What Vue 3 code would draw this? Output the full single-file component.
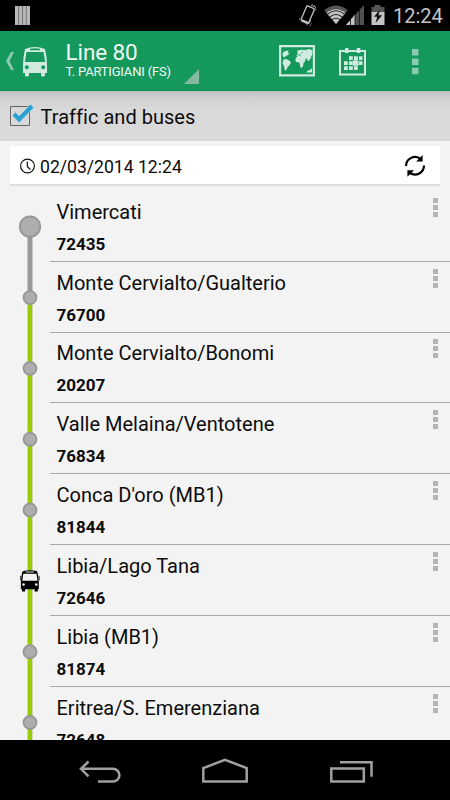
<script setup>
import { ref } from 'vue'

const traffic = ref(true)

const stops = [
  { name: 'Vimercati', code: '72435' },
  { name: 'Monte Cervialto/Gualterio', code: '76700' },
  { name: 'Monte Cervialto/Bonomi', code: '20207' },
  { name: 'Valle Melaina/Ventotene', code: '76834' },
  { name: "Conca D'oro (MB1)", code: '81844' },
  { name: 'Libia/Lago Tana', code: '72646', bus: true },
  { name: 'Libia (MB1)', code: '81874' },
  { name: 'Eritrea/S. Emerenziana', code: '72648' },
]

// height of one stop row, shared by the list and the rail
const pitch = 70.83
const nodeY = (i) => 35.7 + i * pitch
</script>

<template>
  <div class="screen">
    <header class="status">
      <svg class="bars" width="16" height="20" viewBox="0 0 16 20">
        <path d="M0 0h15v19H0z" fill="#b8b8b8" />
        <path d="M3.7 0v19M7.5 0v19M11.3 0v19" stroke="#555" stroke-width=".7" />
      </svg>
      <svg class="tray" width="90" height="31" viewBox="0 0 90 31">
        <g fill="none" stroke="#c4c4c4">
          <path d="M7.700 6.300q.3-.7 1-.4l6.200 2.800q.7.400.4 1.100l-5.600 13q-.4.700-1 .4l-6.200-2.800q-.7-.4-.4-1.100z" stroke-width="1.300" />
          <path d="M2.700 20.300l6.200 2.800" stroke-width="2.400" />
          <path d="M12 5.200l4.500 2.100.3 3M13 4.700l3.700 1.700M0 18v2.500M7.500 24.800l3.500-2 .8-3M11 25.800l1.500-2.500" stroke-width=".9" stroke-dasharray="1.500 .8" />
        </g>
        <path d="M25.200 10.200Q37 1 48.800 10.200L37 24z" fill="#555" />
        <path d="M27.600 13Q37 5.500 46.400 13L37 24z" fill="#c4c4c4" />
        <g fill="none" stroke="#222" stroke-width="1.100">
          <path d="M28.500 14.200q8.500-7 17 0M30.800 17q6.200-5 12.400 0M33.200 19.800q3.800-3 7.600 0" />
        </g>
        <path d="M47 25L65 5v20z" fill="#505050" />
        <path d="M47 25l9-10.600V25z" fill="#c4c4c4" />
        <path d="M51.500 18v7M56 14v11M60.500 9v16" stroke="#111" stroke-width=".8" />
        <path d="M75.500 5h6v2h4v6h-13V7h3z" fill="#555" />
        <path d="M72.500 12h13v13h-13z" fill="#c4c4c4" />
        <path d="M81 9.500l-6 7.200h3.300L76.500 23l6.700-7.700h-3.700z" fill="#111" />
      </svg>
      <span class="time">12:24</span>
    </header>

    <nav class="actionbar">
      <svg class="up" width="10" height="20" viewBox="0 0 10 20">
        <path d="M6 1h3L4.500 10 9 19H6L1 10z" fill="#8acbaf" />
      </svg>
      <svg class="bus" width="26" height="31" viewBox="0 0 26 31">
        <path fill="#d0eadf" fill-rule="evenodd" d="M3 3Q13-1 23 3l1.500 8 .5 8v8h-2v2q0 1.500-1.500 1.500h-1Q19 30.500 19 29v-2H7v2q0 1.500-1.500 1.500h-1Q3 30.500 3 29v-2H1v-8l.5-8zM8 2.800v1.400h10V2.800Q13 1.600 8 2.800zM4.500 6L2.900 16h20.200L21.500 6zM4.800 19.200a2 2 0 1 0 0 4 2 2 0 0 0 0-4zm16.400 0a2 2 0 1 0 0 4 2 2 0 0 0 0-4z" />
      </svg>
      <div class="title">
        <div class="line">Line 80</div>
        <div class="dest">T. PARTIGIANI (FS)</div>
      </div>
      <svg class="corner" width="15" height="15" viewBox="0 0 15 15">
        <path d="M15 0v15H0z" fill="#84b99f" />
      </svg>
      <svg class="map" width="37" height="32" viewBox="0 0 37 32">
        <path d="M1.100 1.100h33.800v29.200H1.100z" fill="none" stroke="#d0eadf" stroke-width="2.200" />
        <g fill="#d0eadf">
          <path d="M4 7.500l2-1.500 3.500-.5-.5 2.500 1.500.5-1.500 1.500-2 1-1.500 1.500-1.500-1-.5-2zM4.500 14.500l3-.5 2.200 1.200 2.300 2-1.500 3-2 2-1.500 3.500-1.300-1-.7-4-1.500-2.500z" />
          <path d="M18.500 5.500l4-.7 4 .3 4-1 3 1.500-.3 4.400-1.200 1.500.5 2-1.500-.2-.5 2.200-1.500.5-1.300-2.500-1.200.3-.5 2.700-1.500 1.500-.3 3-1.700 2-1.200-1-.8-4.500-3.200-.5-1-1.500.5-2.500 1.500-1.500-.8-1.500 1-1z" />
          <path d="M33 23v4.500h-6l2-2 2-.5z" />
        </g>
        <path d="M18.500 9.800l3.500.5m1.500-3.500l-1 1.500" stroke="#14985c" stroke-width=".8" />
      </svg>
      <svg class="calendar" width="28" height="28" viewBox="0 0 28 28">
        <path d="M1 3h25v23.500H1z" fill="none" stroke="#d0eadf" stroke-width="2" />
        <path fill="#d0eadf" d="M6 0h3.500v5H6zM17.800 0h3.500v5h-3.500zM10 8.200h3.800v3.800H10zM15 8.200h3.800v3.800H15zM20 8.200h3.500v3.800H20zM5 13.200h3.800V17H5zM10 13.200h3.800V17H10zM20 13.200h3.500V17H20zM5 18.200h3.800V22H5zM10 18.200h3.800V22H10zM15 18.200h3.800V22H15zM14 12.300h5.500v5.500H14z" />
      </svg>
      <svg class="overflow" width="7" height="26" viewBox="0 0 7 26">
        <path d="M0 0h6.500v6.500H0zM0 9.400h6.500v6.500H0zM0 18.800h6.500v6.500H0z" fill="#8acbaf" />
      </svg>
    </nav>

    <div class="toggle" @click="traffic = !traffic">
      <svg width="26" height="26" viewBox="0 0 26 26">
        <path d="M1.500 5.500h19v19h-19z" fill="none" stroke="#666" stroke-width="1" />
        <g v-if="traffic" fill="none">
          <path d="M5 13.500l5.500 5L23 5" stroke="#b4d8e8" stroke-width="6" opacity=".6" />
          <path d="M5 13l5.200 5.200L23 5" stroke="#2a9fd0" stroke-width="4.200" />
        </g>
      </svg>
      <span>Traffic and buses</span>
    </div>

    <div class="update">
      <svg width="16" height="16" viewBox="0 0 16 16" fill="none" stroke="#111">
        <circle cx="7.500" cy="8" r="6.900" stroke-width="1.200" />
        <path d="M7.300 3.500v5l3 3" stroke-width="1.200" />
      </svg>
      <span>02/03/2014 12:24</span>
      <svg class="refresh" width="22" height="24" viewBox="0 0 22 24">
        <path d="M2 12A9 9 0 0 1 16 4.600M20 11.500A9 9 0 0 1 6 19" fill="none" stroke="#000" stroke-width="2.200" />
        <path d="M18.600 1v6.500h-6.500zM3.400 22.800v-6.500H10z" fill="#000" />
      </svg>
    </div>

    <main class="stops">
      <svg class="rail" width="50" height="550" viewBox="0 0 50 550">
        <path d="M30 36v70" stroke="#999" stroke-width="5" />
        <path d="M30 106v444" stroke="#c9d3b4" stroke-width="5.600" />
        <path d="M30 106v444" stroke="#9c0" stroke-width="4.200" />
        <template v-for="(stop, i) in stops" :key="stop.code">
          <g v-if="stop.bus" :transform="`translate(20.300 ${nodeY(i) - 11})`">
            <path d="M2 1.800Q3 .5 9.500.3T17 1.800l1 5 .5 5v7.700H.6v-7.700l.5-5z" />
            <path d="M3 4h13.200l1 7H2z" fill="#f3f3f3" />
            <path d="M5.500 1.500h8v1.200h-8z" fill="#bbb" />
            <path d="M1.700 19h3.200v2.700H1.700zM14.300 19h3.200v2.700h-3.200z" />
            <path d="M.3 6v4.500M18.900 6v4.500" stroke="#000" stroke-width=".8" />
            <circle cx="3.300" cy="14.700" r="1.200" fill="#fff" />
            <circle cx="16" cy="14.700" r="1.200" fill="#fff" />
          </g>
          <circle v-else cx="30" :cy="nodeY(i)" :r="i ? 6.500 : 10.200" fill="#adadad" stroke="#979797" stroke-width="1.800" />
        </template>
      </svg>
      <ul>
        <li v-for="stop in stops" :key="stop.code">
          <div>
            <div class="name">{{ stop.name }}</div>
            <div class="code">{{ stop.code }}</div>
          </div>
          <svg width="5" height="20" viewBox="0 0 5 20">
            <path d="M0 0h5v5H0zM0 7h5v5H0zM0 14h5v5H0z" fill="#b4b4b4" />
          </svg>
        </li>
      </ul>
    </main>

    <footer class="navbar">
      <svg width="450" height="60" viewBox="0 0 450 60" fill="none" stroke="#a0a0a0" stroke-width="2.500">
        <path d="M80.500 28.800H113a6.400 6.400 0 0 1 0 12.800H98M88.500 21.500l-7.500 7.300 7.500 7.500" />
        <path d="M203.300 41.500V28L225 19.800 246.700 28v13.500z" />
        <path d="M331.300 28.600h32.500v12.900h-32.500zM340 22.200h31.500v14.500" />
      </svg>
    </footer>
  </div>
</template>

<style>
body { margin: 0; }
</style>

<style scoped>
.screen {
  width: 450px; height: 800px; overflow: hidden;
  display: flex; flex-direction: column;
  background: #f3f3f3; color: #0c0c0c;
  font-family: Roboto, sans-serif;
}
svg { display: block; flex: none; }

.status { flex: none; height: 31px; display: flex; background: #000; color: #c4c4c4; }
.bars { margin: 6px 0 0 15px; }
.tray { margin-left: 268px; }
.time { margin-left: 4px; font-size: 20px; line-height: 33px; white-space: nowrap; }

.actionbar { flex: none; height: 60px; display: flex; background: #14985c; box-shadow: inset 0 -1px #078d50; color: #f0f8f4; }
.up { margin: 20px 0 0 5px; }
.bus { margin: 15px 0 0 7px; }
.title { width: 119px; margin-left: 17.5px; white-space: nowrap; }
.line { margin-top: 7px; font-size: 22.5px; line-height: 28px; letter-spacing: -.1px; }
.dest { font-size: 13px; line-height: 13px; margin-top: -1px; letter-spacing: -.18px; }
.corner { margin: 38px 0 0 -.5px; }
.map { margin: 14px 0 0 80px; }
.calendar { margin: 17px 0 0 23px; }
.overflow { margin: 18px 0 0 45px; }

.toggle {
  flex: none; height: 50px; display: flex;
  background: linear-gradient(#c2c2c2, #cecece 6px, #d9d9d9 18px);
  font-size: 20px; line-height: 52px; letter-spacing: .03px; white-space: nowrap;
}
.toggle svg { margin: 10px 5.5px 0 9px; }

.update {
  flex: none; height: 38px; margin: 5px 10px 0; display: flex; align-items: center;
  background: #fff; box-shadow: 0 2px #dedede;
  font-size: 17.6px; white-space: nowrap;
}
.update svg:first-child { margin: 2px 4px 0 10px; }
.update span { margin-top: 3px; }
.refresh { margin: 2px 14px 0 auto; }

.stops { flex: 1; min-height: 0; overflow: hidden; display: flex; align-items: flex-start; padding-top: 7px; }
.stops ul { flex: 1; margin: 0; padding: 0; list-style: none; }
.stops li {
  box-sizing: border-box; height: 70.83px; border-bottom: 1px solid #a8a8a8;
  display: flex; justify-content: space-between; padding: 6.8px 12px 0 6.5px; white-space: nowrap;
}
.name { font-size: 20px; line-height: 29px; }
.code { font-size: 17px; line-height: 34px; font-weight: 700; }

.navbar { flex: none; height: 60px; background: #000; }
</style>
